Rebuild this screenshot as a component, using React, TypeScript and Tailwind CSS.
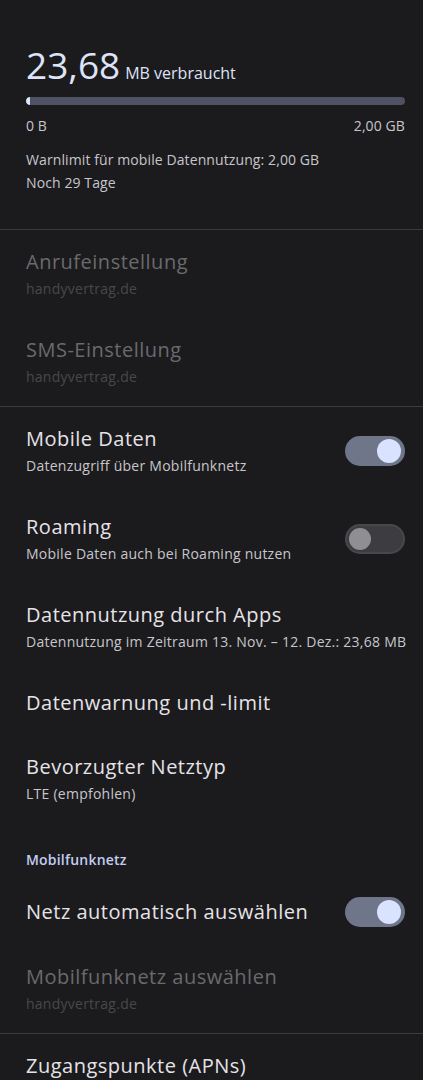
import React from "react";

function Toggle({ on }: { on: boolean }) {
  if (on) {
    return (
      <div className="relative w-[60px] h-[30px] rounded-full bg-[#6f7689] shrink-0">
        <div className="absolute right-[4px] top-[3px] w-[24px] h-[24px] rounded-full bg-[#d9e2ff]" />
      </div>
    );
  }
  return (
    <div className="relative w-[60px] h-[30px] rounded-full bg-[#3d3d41] border-2 border-[#48484c] shrink-0">
      <div className="absolute left-[2px] top-[2px] w-[22px] h-[22px] rounded-full bg-[#8e8e93]" />
    </div>
  );
}

function Row({
  title,
  subtitle,
  disabled,
  toggle,
}: {
  title: string;
  subtitle?: string;
  disabled?: boolean;
  toggle?: boolean;
}) {
  return (
    <div className="flex items-center justify-between pl-[26px] pr-[18px] py-[19px]">
      <div className="flex flex-col min-w-0">
        <div
          className={`text-[20px] leading-[26px] tracking-[0.5px] ${
            disabled ? "text-[#6a6a6d]" : "text-[#e6e3e8]"
          }`}
        >
          {title}
        </div>
        {subtitle && (
          <div
            className={`mt-[4px] text-[14px] leading-[20px] tracking-[0.25px] whitespace-nowrap ${
              disabled ? "text-[#48484b]" : "text-[#c7c6cc]"
            }`}
          >
            {subtitle}
          </div>
        )}
      </div>
      {toggle !== undefined && <Toggle on={toggle} />}
    </div>
  );
}

export default function App() {
  return (
    <div
      className="w-[423px] min-h-[1080px] bg-[#1b1b1d] overflow-hidden"
      style={{ fontFamily: "'Open Sans', Roboto, sans-serif" }}
    >
      <div className="pl-[26px] pr-[18px] pt-[43px] pb-[35px]">
        <div className="flex items-baseline">
          <span className="text-[37px] leading-[44px] text-[#dee3f8]">23,68</span>
          <span className="ml-[5px] text-[16px] text-[#dee3f8]">MB verbraucht</span>
        </div>
        <div className="mt-[10px] h-[8px] w-full rounded-full bg-[#4f5262] overflow-hidden flex">
          <div className="w-[4px] h-full bg-[#dde5ff] rounded-l-full" />
        </div>
        <div className="mt-[11px] flex justify-between text-[14px] leading-[20px] tracking-[0.1px] text-[#c7c6cc]">
          <span>0 B</span>
          <span>2,00 GB</span>
        </div>
        <div className="mt-[12px] text-[14px] leading-[23px] tracking-[0.1px] text-[#c7c6cc]">
          <div>Warnlimit für mobile Datennutzung: 2,00 GB</div>
          <div>Noch 29 Tage</div>
        </div>
      </div>
      <div className="h-px bg-[#3b3b3e]" />
      <Row title="Anrufeinstellung" subtitle="handyvertrag.de" disabled />
      <Row title="SMS-Einstellung" subtitle="handyvertrag.de" disabled />
      <div className="h-px bg-[#3b3b3e]" />
      <Row title="Mobile Daten" subtitle="Datenzugriff über Mobilfunknetz" toggle={true} />
      <Row title="Roaming" subtitle="Mobile Daten auch bei Roaming nutzen" toggle={false} />
      <Row
        title="Datennutzung durch Apps"
        subtitle="Datennutzung im Zeitraum 13. Nov. – 12. Dez.: 23,68 MB"
      />
      <Row title="Datenwarnung und -limit" />
      <Row title="Bevorzugter Netztyp" subtitle="LTE (empfohlen)" />
      <div className="pl-[26px] pr-[18px] pt-[27px] pb-[9px] text-[14px] leading-[20px] font-semibold tracking-[0.2px] text-[#c3cdf2]">
        Mobilfunknetz
      </div>
      <div className="flex items-center justify-between pl-[26px] pr-[18px] py-[18px] min-h-[66px]">
        <div className="text-[20px] leading-[26px] tracking-[0.5px] text-[#e6e3e8]">
          Netz automatisch auswählen
        </div>
        <Toggle on={true} />
      </div>
      <Row title="Mobilfunknetz auswählen" subtitle="handyvertrag.de" disabled />
      <div className="h-px bg-[#3b3b3e]" />
      <Row title="Zugangspunkte (APNs)" />
    </div>
  );
}
